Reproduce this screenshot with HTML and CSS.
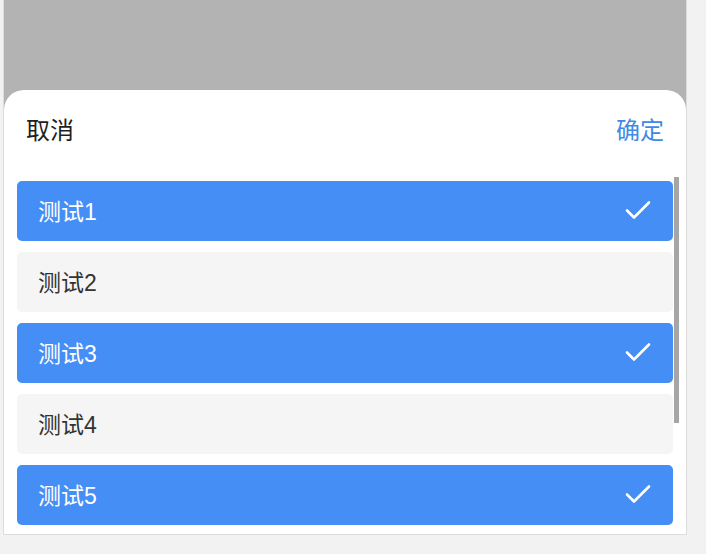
FILE: index.html
```html
<!DOCTYPE html>
<html lang="zh-CN">
<head>
    <meta charset="UTF-8">
    <meta name="viewport" content="width=device-width, initial-scale=1.0">
    <title>多选弹窗</title>
    <link rel="stylesheet" href="styles.css">
</head>
<body>
    <div class="phone">
        <div class="mask"></div>
        <div class="sheet">
            <div class="sheet-header">
                <span class="btn-cancel">取消</span>
                <span class="btn-confirm">确定</span>
            </div>
            <div class="list-wrap">
                <ul class="option-list">
                    <li class="option selected">测试1<svg class="check" viewBox="0 0 26 20"><path d="M2 10.5 L9 17.5 L24 2.5"/></svg></li>
                    <li class="option">测试2</li>
                    <li class="option selected">测试3<svg class="check" viewBox="0 0 26 20"><path d="M2 10.5 L9 17.5 L24 2.5"/></svg></li>
                    <li class="option">测试4</li>
                    <li class="option selected">测试5<svg class="check" viewBox="0 0 26 20"><path d="M2 10.5 L9 17.5 L24 2.5"/></svg></li>
                </ul>
                <div class="scroll-track">
                    <div class="scroll-thumb"></div>
                </div>
            </div>
        </div>
    </div>
</body>
</html>
```

FILE: styles.css
```css
body {
    margin: 0;
    background-color: #f2f2f2;
    font-family: "Liberation Sans", "Noto Sans CJK SC", sans-serif;
    height: 554px;
    overflow: hidden;
}

.phone {
    margin-left: 3px;
    width: 682px;
    height: 534px;
    border-left: 1px solid #dcdcdc;
    border-right: 1px solid #dcdcdc;
    border-bottom: 1px solid #dcdcdc;
    background-color: #b3b3b3;
    display: flex;
    flex-direction: column;
}

.mask {
    height: 90px;
    flex: none;
}

.sheet {
    flex: 1;
    min-height: 0;
    background-color: #ffffff;
    border-radius: 20px 20px 0 0;
    display: flex;
    flex-direction: column;
}

.sheet-header {
    height: 87px;
    flex: none;
    box-sizing: border-box;
    padding: 28px 22px 0 22px;
    display: flex;
    justify-content: space-between;
    font-size: 24px;
    line-height: 26px;
}

.btn-cancel {
    color: #1f1f1f;
}

.btn-confirm {
    color: #4189e3;
}

.list-wrap {
    flex: 1;
    min-height: 0;
    display: flex;
    padding-right: 7px;
}

.option-list {
    list-style-type: none;
    margin: 0;
    padding: 4px 1px 0 13px;
    flex: 1;
    min-width: 0;
    display: flex;
    flex-direction: column;
    gap: 11px;
}

.scroll-track {
    width: 5px;
    flex: none;
}

.scroll-thumb {
    height: 246px;
    background-color: #a6a6a6;
}

.option {
    flex: none;
    height: 60px;
    box-sizing: border-box;
    padding: 0 22px 2px 21px;
    border-radius: 5px;
    background-color: #f5f5f5;
    color: #333333;
    font-size: 23px;
    display: flex;
    align-items: center;
    justify-content: space-between;
}

.option.selected {
    background-color: #448ef6;
    color: #ffffff;
}

.check {
    width: 26px;
    height: 20px;
    fill: none;
    stroke: #ffffff;
    stroke-width: 2.6;
    stroke-linecap: round;
    stroke-linejoin: round;
}
```
